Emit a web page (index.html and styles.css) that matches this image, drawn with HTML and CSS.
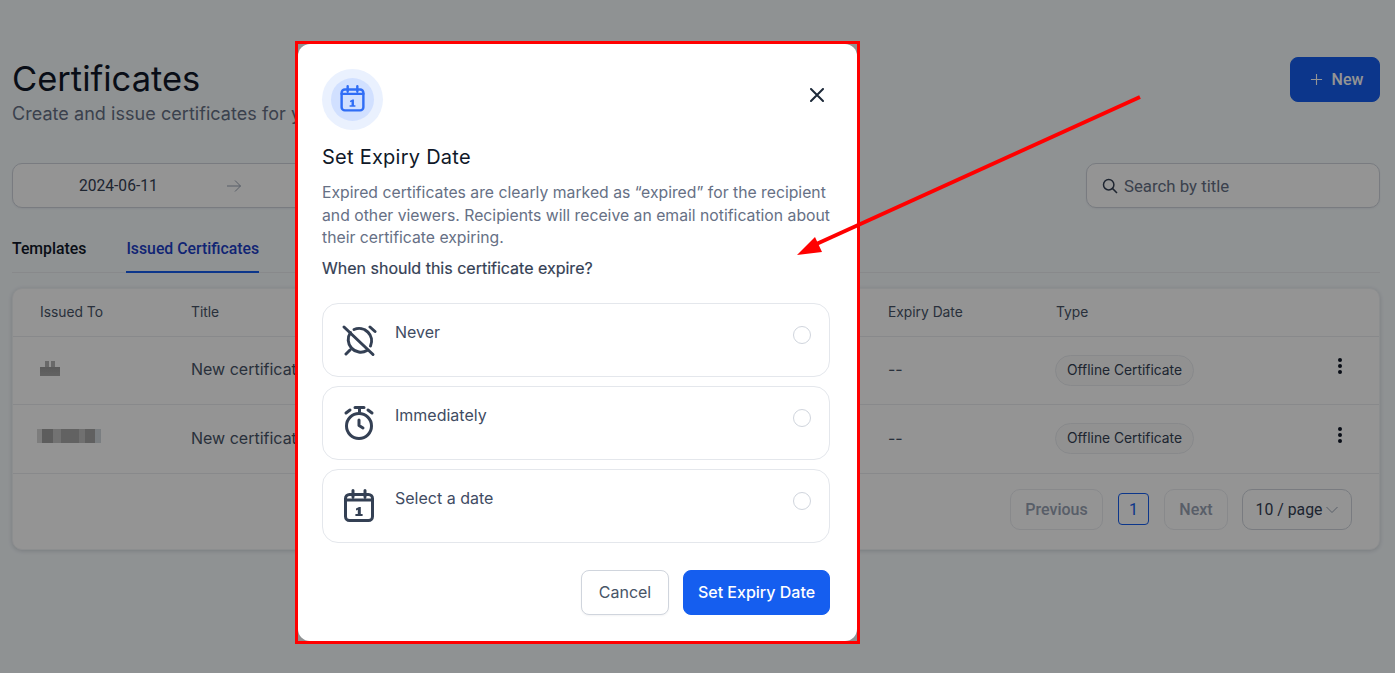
FILE: index.html
```html
<!DOCTYPE html>
<html lang="en">
<head>
<meta charset="utf-8">
<title>Certificates</title>
<link rel="stylesheet" href="styles.css">
</head>
<body>
<main class="page">
  <header class="head">
    <div class="head-text">
      <h1 class="page-title">Certificates</h1>
      <p class="page-sub">Create and issue certificates for your learners</p>
    </div>
    <button class="btn-new"><svg class="plus" viewBox="0 0 14 14"><path d="M7 1v12M1 7h12"/></svg>New</button>
  </header>
  <section class="filters">
    <div class="range">
      <span class="range-date">2024-06-11</span>
      <svg class="range-arrow" viewBox="0 0 16 16"><path d="M1 8h13.500M9 2.500 14.500 8 9 13.500"/></svg>
    </div>
    <div class="search">
      <svg class="search-icon" viewBox="0 0 16 16"><circle cx="6.700" cy="6.700" r="5.200"/><path d="m10.400 10.400 4.600 4.600"/></svg>
      <span>Search by title</span>
    </div>
  </section>
  <nav class="tabs">
    <span class="tab">Templates</span>
    <span class="tab tab-active">Issued Certificates</span>
  </nav>
  <section class="card">
    <div class="tr th">
      <span>Issued To</span><span>Title</span><span>Expiry Date</span><span>Type</span><span></span>
    </div>
    <div class="tr row">
      <span class="redact redact-a"></span>
      <span class="cert-title">New certificate</span>
      <span class="dash">--</span>
      <span><span class="pill">Offline Certificate</span></span>
      <svg class="kebab" viewBox="0 0 6 18"><circle cx="3" cy="3" r="2"/><circle cx="3" cy="9" r="2"/><circle cx="3" cy="15" r="2"/></svg>
    </div>
    <div class="tr row row-tall">
      <span class="redact redact-b"></span>
      <span class="cert-title">New certificate</span>
      <span class="dash">--</span>
      <span><span class="pill">Offline Certificate</span></span>
      <svg class="kebab" viewBox="0 0 6 18"><circle cx="3" cy="3" r="2"/><circle cx="3" cy="9" r="2"/><circle cx="3" cy="15" r="2"/></svg>
    </div>
    <div class="pager">
      <span class="pg pg-prev">Previous</span>
      <span class="pg-num">1</span>
      <span class="pg pg-next">Next</span>
      <span class="pg-size">10 / page<svg class="chev" viewBox="0 0 12 8"><path d="M.5 1 6 6.500 11.500 1"/></svg></span>
    </div>
  </section>
</main>

<div class="overlay"></div>

<div class="marker">
  <div class="modal">
    <div class="modal-top">
      <div class="halo"><div class="halo-in">
        <svg class="cal-small" viewBox="0 0 36 36"><rect x="4.500" y="5.500" width="27" height="26" rx="4"/><path d="M12 1.500V8M24 1.500V8M4.500 11h27"/><path class="fill" d="M15 19.500l3-1.500h1.800v7h1.800v2H14.400v-2h2.400v-4.300l-1.800.7z"/></svg>
      </div></div>
      <svg class="close" viewBox="0 0 14 14"><path d="M1 1l12 12M13 1 1 13"/></svg>
    </div>
    <h2 class="modal-title">Set Expiry Date</h2>
    <p class="modal-desc">Expired certificates are clearly marked as “expired” for the recipient and other viewers. Recipients will receive an email notification about their certificate expiring.</p>
    <p class="modal-q">When should this certificate expire?</p>
    <div class="options">
      <div class="option">
        <svg class="opt-icon" viewBox="0 0 36 36"><path d="M3 4l29 27.500"/><path d="M9.500 9.500a12.500 12.500 0 0 0 16.500 18M29.500 23A12.500 12.500 0 0 0 13 6.500"/><path d="M29 4l5 4.500M5 31l4-4"/></svg>
        <span class="opt-label">Never</span>
        <span class="radio"></span>
      </div>
      <div class="option">
        <svg class="opt-icon" viewBox="0 0 36 36"><circle cx="18" cy="20" r="12.500"/><path d="M14 1.500h9M18.500 1.500V6M5 7l4-3M27 4l4 3M18 14v5.500l4 2.500"/></svg>
        <span class="opt-label">Immediately</span>
        <span class="radio"></span>
      </div>
      <div class="option">
        <svg class="opt-icon" viewBox="0 0 36 36"><rect x="4.500" y="5.500" width="27" height="26" rx="4"/><path d="M12 1.500V8M24 1.500V8M4.500 11h27"/><path class="fill" d="M15 19.500l3-1.500h1.800v7h1.800v2H14.400v-2h2.400v-4.300l-1.800.7z"/></svg>
        <span class="opt-label">Select a date</span>
        <span class="radio"></span>
      </div>
    </div>
    <div class="actions">
      <button class="btn-cancel">Cancel</button>
      <button class="btn-primary">Set Expiry Date</button>
    </div>
  </div>
</div>

<svg class="arrow" viewBox="0 0 1395 673"><path class="arrow-line" d="M1140 97 812 246"/><path class="arrow-head" d="M797 255 815 237 822 252z"/></svg>
</body>
</html>
```

FILE: styles.css
```css
* { box-sizing: border-box; }
html, body { margin: 0; height: 100%; overflow: hidden; }
body { background: #f6fbfe; font-family: Inter, "Liberation Sans", sans-serif; color: #101828; }

.page { padding: 57px 15px 0 12px; }

.head { display: flex; justify-content: space-between; align-items: flex-start; height: 106px; }
.page-title { margin: 3px 0 0; font-size: 34.500px; font-weight: 400; line-height: 38px; color: #101828; }
.page-sub { margin: 4px 0 0; font-size: 18px; line-height: 24px; color: #667085; white-space: nowrap; letter-spacing: .05px; }
.btn-new { display: flex; align-items: center; justify-content: center; gap: 9px; width: 90px; height: 45px; border: 1px solid #155eef; background: #155eef; color: #fff; border-radius: 8px; font: 500 16px Roboto, sans-serif; padding: 0 0 0 3px; }
.plus { width: 13px; height: 13px; fill: none; stroke: #fff; stroke-width: 1.200; }

.filters { display: flex; justify-content: space-between; height: 45px; }
.range { display: flex; align-items: center; width: 600px; background: #fff; border: 1px solid #d0d5dd; border-radius: 10px; padding-left: 66px; box-shadow: 0 1px 2px rgba(16,24,40,.05); }
.range-date { font: 400 15.600px Roboto, sans-serif; color: #344054; }
.range-arrow { width: 16px; height: 16px; margin-left: 68px; fill: none; stroke: #98a2b3; stroke-width: 1; }
.search { display: flex; align-items: center; gap: 6px; width: 294px; background: #fff; border: 1px solid #d0d5dd; border-radius: 10px; padding-left: 15px; font: 400 16.800px Roboto, sans-serif; color: #667085; box-shadow: 0 1px 2px rgba(16,24,40,.05); }
.search-icon { width: 16px; height: 16px; fill: none; stroke: #344054; stroke-width: 1.500; }

.tabs { display: flex; gap: 40px; height: 65px; padding-top: 31px; border-bottom: 1px solid #eaecf0; }
.tab { font: 500 15.800px/20px Roboto, sans-serif; color: #101828; height: 34px; }
.tab-active { color: #1d40c8; border-bottom: 2px solid #155eef; }

.card { margin-top: 15px; background: #fff; border: 1px solid #f2f4f7; border-radius: 10px; height: 262px; box-shadow: 0 1px 4px rgba(16,24,40,.16); overflow: hidden; }
.tr { display: grid; grid-template-columns: 151px 697px 168px 1fr 36px; padding-left: 27px; padding-right: 24px; align-items: center; border-bottom: 1px solid #eaecf0; }
.th { height: 48px; font-size: 13.800px; color: #475467; padding-bottom: 2px; }
.row { height: 68px; font-size: 16px; color: #475467; padding-bottom: 1px; }
.row-tall { height: 69px; }
.cert-title { white-space: nowrap; overflow: hidden; margin-top: -2px; }
.dash { color: #475467; margin-top: -2px; }
.pill { display: inline-block; height: 31px; line-height: 29px; padding: 0 11px; margin-left: -1px; font-size: 13.800px; color: #344054; background: #fafafa; border: 1px solid #eaecf0; border-radius: 16px; }
.kebab { width: 6px; height: 18px; margin: -8px 0 0 18px; fill: #101828; }
.redact { display: block; filter: blur(.6px); }
.redact-a { width: 20px; height: 15px; margin-top: -4px; background: linear-gradient(to right, transparent 0 5px, #b5b5b5 5px 9px, transparent 9px 11px, #b5b5b5 11px 15px, transparent 15px) top / 100% 6px no-repeat, linear-gradient(#9c9c9c, #aaa) bottom / 100% 9px no-repeat; }
.redact-b { width: 64px; height: 14px; margin: -6px 0 0 -3px; background: linear-gradient(to right, #d8d8d8 0 5px, #a0a0a0 5px 16px, #c4c4c4 16px 24px, #aaa 24px 42px, #c2c2c2 42px 48px, #a5a5a5 48px 58px, #d3d9df 58px); }

.pager { display: flex; align-items: flex-start; justify-content: flex-end; height: 75px; padding: 15px 27px 0 0; font: 400 16px Roboto, sans-serif; }
.pg { display: flex; align-items: center; justify-content: center; height: 41px; border: 1px solid #eaecf0; border-radius: 10px; color: #98a2b3; font-weight: 500; }
.pg-prev { width: 93px; }
.pg-num { display: flex; align-items: center; justify-content: center; width: 31px; height: 32px; margin: 4px 15px 0; border: 1px solid #155eef; border-radius: 4px; color: #155eef; }
.pg-next { width: 64px; }
.pg-size { display: flex; align-items: center; justify-content: center; gap: 4px; width: 110px; height: 41px; margin-left: 14px; border: 1px solid #d0d5dd; border-radius: 10px; color: #344054; font-size: 15.800px; }
.chev { width: 12px; height: 8px; fill: none; stroke: #98a2b3; stroke-width: 1; }

.overlay { position: fixed; inset: 0; background: rgba(0,0,0,.42); }

.marker { position: absolute; left: 295px; top: 41px; width: 565px; height: 603px; border: 3px solid #f00; }
.modal { height: 100%; background: #fff; border-radius: 12px; padding: 25px 27px 0 24px; display: flex; flex-direction: column; }
.modal-top { display: flex; justify-content: space-between; align-items: flex-start; }
.halo { width: 61px; height: 61px; border-radius: 50%; background: #eaf1fe; display: flex; align-items: center; justify-content: center; }
.halo-in { width: 43px; height: 43px; border-radius: 50%; background: #d1e0ff; display: flex; align-items: center; justify-content: center; }
.cal-small { width: 29px; height: 29px; flex: none; fill: none; stroke: #2f6df6; stroke-width: 3; stroke-linecap: round; }
.cal-small .fill { fill: #2f6df6; stroke: none; }
.close { width: 14px; height: 14px; margin: 18.500px 6.500px 0 0; fill: none; stroke: #1d2939; stroke-width: 2; stroke-linecap: round; }
.modal-title { margin: 15px 0 0; font-size: 20px; font-weight: 400; line-height: 24px; color: #101828; letter-spacing: .25px; }
.modal-desc { margin: 13px 0 0; font-size: 15.750px; line-height: 22.500px; color: #667085; }
.modal-q { margin: 7px 0 0; font-size: 16px; line-height: 22px; font-weight: 400; color: #344054; -webkit-text-stroke: .2px #344054; }
.options { display: flex; flex-direction: column; gap: 9px; margin-top: 24px; }
.option { display: flex; align-items: flex-start; height: 74px; border: 1px solid #e4e7ec; border-radius: 16px; padding: 19px 18px 0 18px; }
.opt-icon { width: 36px; height: 36px; flex: none; fill: none; stroke: #344054; stroke-width: 3; stroke-linecap: round; stroke-linejoin: round; }
.opt-icon .fill { fill: #344054; stroke: none; }
.opt-label { flex: 1; margin: -1px 0 0 18px; font-size: 16px; line-height: 20px; color: #3f4c63; }
.radio { width: 18px; height: 18px; margin-top: 3px; border: 1px solid #d0d5dd; border-radius: 50%; }
.actions { display: flex; justify-content: flex-end; gap: 14px; margin-top: 27px; }
.btn-cancel { width: 88px; height: 45px; background: #fff; border: 1px solid #d0d5dd; border-radius: 8px; font: 400 16px Inter, sans-serif; color: #475467; box-shadow: 0 1px 2px rgba(16,24,40,.05); padding-left: 6px; }
.btn-primary { width: 147px; height: 45px; background: #155eef; border: 1px solid #155eef; border-radius: 8px; font: 500 16px Inter, sans-serif; color: #fff; }

.arrow { position: fixed; inset: 0; width: 1395px; height: 673px; pointer-events: none; }
.arrow-line { stroke: #f00; stroke-width: 4; fill: none; }
.arrow-head { fill: #f00; }
```
